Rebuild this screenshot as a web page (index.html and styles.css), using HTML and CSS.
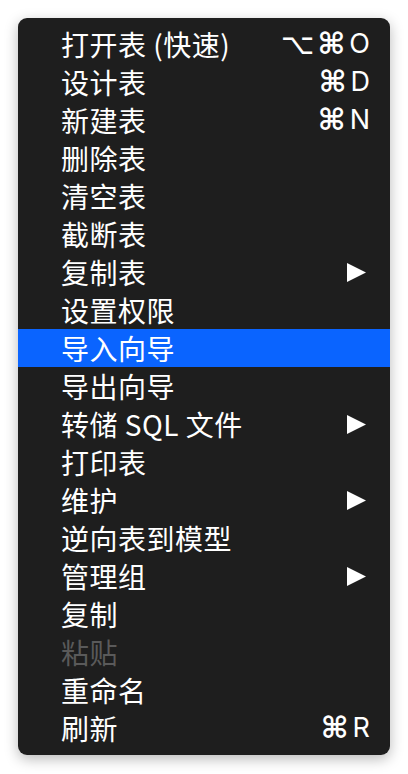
FILE: index.html
```html
<!DOCTYPE html>
<html>
<head>
<meta charset="utf-8">
<link rel="stylesheet" href="styles.css">
</head>
<body>
<div class="menu">
  <div class="item"><span class="label">打开表 (快速)</span><span class="key"><span class="sym opt">⌥</span><span class="sym">⌘</span>O</span></div>
  <div class="item"><span class="label">设计表</span><span class="key"><span class="sym">⌘</span>D</span></div>
  <div class="item"><span class="label">新建表</span><span class="key"><span class="sym">⌘</span>N</span></div>
  <div class="item"><span class="label">删除表</span></div>
  <div class="item"><span class="label">清空表</span></div>
  <div class="item"><span class="label">截断表</span></div>
  <div class="item"><span class="label">复制表</span><svg class="arrow" viewBox="0 0 19 19"><polygon points="0,0 19,9.5 0,19" fill="#fff"/></svg></div>
  <div class="item"><span class="label">设置权限</span></div>
  <div class="item active"><span class="label">导入向导</span></div>
  <div class="item"><span class="label">导出向导</span></div>
  <div class="item"><span class="label">转储 SQL 文件</span><svg class="arrow" viewBox="0 0 19 19"><polygon points="0,0 19,9.5 0,19" fill="#fff"/></svg></div>
  <div class="item"><span class="label">打印表</span></div>
  <div class="item"><span class="label">维护</span><svg class="arrow" viewBox="0 0 19 19"><polygon points="0,0 19,9.5 0,19" fill="#fff"/></svg></div>
  <div class="item"><span class="label">逆向表到模型</span></div>
  <div class="item"><span class="label">管理组</span><svg class="arrow" viewBox="0 0 19 19"><polygon points="0,0 19,9.5 0,19" fill="#fff"/></svg></div>
  <div class="item"><span class="label">复制</span></div>
  <div class="item disabled"><span class="label">粘贴</span></div>
  <div class="item"><span class="label">重命名</span></div>
  <div class="item"><span class="label">刷新</span><span class="key"><span class="sym">⌘</span>R</span></div>
</div>
</body>
</html>
```

FILE: styles.css
```css
html, body {
  margin: 0;
  padding: 0;
  background: #ffffff;
}
body {
  padding: 18px;
  width: 372px;
  font-family: "Inter", "Noto Sans CJK SC", sans-serif;
}
.menu {
  width: 372px;
  height: 737px;
  box-sizing: border-box;
  padding: 7px 0 8px;
  background: #1e1e1e;
  border-radius: 9px;
  box-shadow: 0 4px 14px rgba(0, 0, 0, 0.28);
  display: flex;
  flex-direction: column;
}
.item {
  height: 38px;
  display: flex;
  align-items: center;
  justify-content: space-between;
  padding: 0 20px 0 43px;
  color: #ffffff;
  font-size: 28px;
}
.label {
  font-family: "Noto Sans CJK SC", sans-serif;
  letter-spacing: 0.5px;
  line-height: 38px;
}
.key {
  font-family: "Inter", sans-serif;
  font-size: 27px;
  display: flex;
  align-items: center;
  line-height: 38px;
}
.sym {
  font-family: "DejaVu Sans", sans-serif;
  font-size: 30px;
  margin-right: 4px;
  font-weight: 600;
}
.opt {
  font-size: 29px;
  font-weight: 400;
  margin-right: 3px;
}
.arrow {
  width: 19px;
  height: 19px;
  margin-right: 4px;
}
.active {
  background: #0a64ff;
}
.disabled {
  color: #5a5a5a;
}
```
